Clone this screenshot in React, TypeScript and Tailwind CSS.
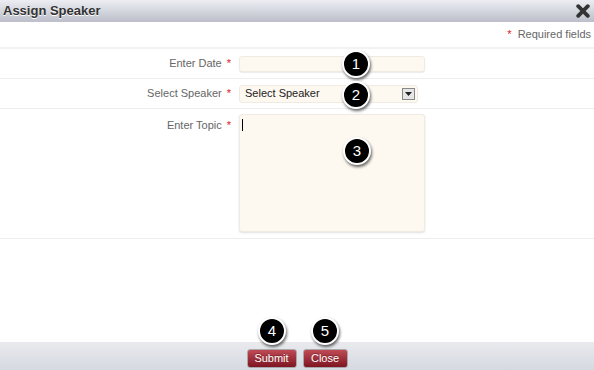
import React from 'react';

// numbered callout over the form
function Badge({ n, className }: { n: number; className: string }) {
  return (
    <div
      className={`absolute w-[28px] h-[28px] rounded-full bg-black border-2 border-white shadow-[1px_2px_3px_rgba(0,0,0,0.6)] flex items-center justify-center text-white text-[15px] font-['Liberation_Sans',Arial,sans-serif] ${className}`}
    >
      {n}
    </div>
  );
}

function Label({ text }: { text: string }) {
  return (
    <div className="w-[231px] text-right text-[11px] text-[#666]">
      {text}
      <span className="text-[#e02020] ml-[5px]">*</span>
    </div>
  );
}

export default function App() {
  return (
    <div className="relative w-[594px] h-[370px] bg-white flex flex-col font-['Liberation_Sans',Arial,sans-serif] overflow-hidden">
      {/* header */}
      <div className="h-[22px] flex items-center justify-between pl-[3px] pr-[4px] bg-gradient-to-b from-[#eceef3] to-[#bcbfca]">
        <span className="text-[13px] font-bold text-[#333] [text-shadow:0_1px_0_#fff]">Assign Speaker</span>
        <svg width="14" height="14" viewBox="0 0 14 14">
          <path d="M2.2 2.2 L11.8 11.8 M11.8 2.2 L2.2 11.8" stroke="#333" strokeWidth="3.8" strokeLinecap="round" />
        </svg>
      </div>

      {/* required note */}
      <div className="h-[27px] flex items-center justify-end pr-[3px] border-b-2 border-[#f2f2f2] text-[11px] text-[#666]">
        <span className="text-[#e02020] mr-[6px]">*</span>Required fields
      </div>

      <div className="h-[30px] flex items-center border-b border-[#eeeeee]">
        <Label text="Enter Date" />
        <div className="ml-[8px] w-[186px] h-[16px] bg-[#fdf8f0] border border-[#f0ebe2] rounded-[3px] shadow-[0_1px_1px_rgba(0,0,0,0.08)]" />
      </div>

      <div className="h-[30px] flex items-center border-b border-[#eeeeee]">
        <Label text="Select Speaker" />
        <div className="ml-[8px] w-[179px] h-[18px] bg-[#fdf8f0] border border-[#f0ebe2] rounded-[3px] flex items-center justify-between pl-[5px] pr-[2px] text-[11px] text-[#222]">
          <span>Select Speaker</span>
          <div className="w-[13px] h-[12px] border border-[#888] bg-[#e6e6e6] flex items-center justify-center">
            <svg width="7" height="4" viewBox="0 0 7 4">
              <path d="M0 0 H7 L3.5 4 Z" fill="#222" />
            </svg>
          </div>
        </div>
      </div>

      <div className="h-[130px] flex items-start pt-[5px] border-b border-[#eeeeee]">
        <div className="pt-[3px]">
          <Label text="Enter Topic" />
        </div>
        <div className="ml-[8px] w-[186px] h-[118px] bg-[#fdf8f0] border border-[#f0ebe2] rounded-[3px] shadow-[0_1px_2px_rgba(0,0,0,0.12)] pl-[2px] pt-[4px]">
          <div className="w-px h-[12px] bg-black" />
        </div>
      </div>

      <div className="flex-1" />

      {/* footer */}
      <div className="h-[28px] bg-gradient-to-b from-[#e9eaee] to-[#d6d9e1] flex items-start justify-center gap-[6px] pt-[7px]">
        <button className="w-[50px] h-[19px] rounded-[3px] border border-[#a8a8a8] bg-gradient-to-b from-[#c04a55] to-[#7e1522] text-white text-[11px] [text-shadow:0_-1px_0_rgba(0,0,0,0.3)]">
          Submit
        </button>
        <button className="w-[45px] h-[19px] rounded-[3px] border border-[#a8a8a8] bg-gradient-to-b from-[#c04a55] to-[#7e1522] text-white text-[11px] [text-shadow:0_-1px_0_rgba(0,0,0,0.3)]">
          Close
        </button>
      </div>

      <Badge n={1} className="left-[342px] top-[50px]" />
      <Badge n={2} className="left-[342px] top-[81px]" />
      <Badge n={3} className="left-[343px] top-[137px]" />
      <Badge n={4} className="left-[258px] top-[317px]" />
      <Badge n={5} className="left-[311px] top-[317px]" />
    </div>
  );
}
